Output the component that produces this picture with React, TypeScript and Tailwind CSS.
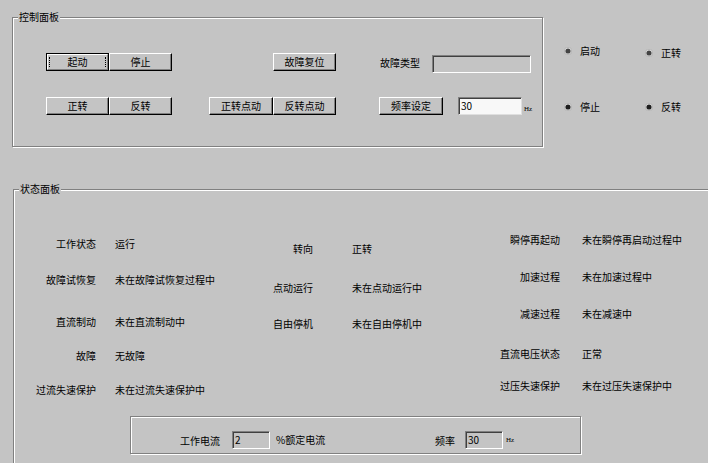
import React from 'react';

const font = { fontFamily: '"Noto Sans CJK SC", "Liberation Sans", sans-serif' };

function Btn({ label, w, def }: { label: string; w: string; def?: boolean }) {
  if (def) {
    return (
      <button className={`${w} h-[18px] border border-black bg-[#c4c4c4] p-0`}>
        <div className="h-full w-full border border-t-white border-l-white border-b-[#808080] border-r-[#808080] px-[1px] py-[2px]">
          <div className="flex h-full w-full items-center justify-center border-x border-dotted border-black text-[10px] leading-none">
            {label}
          </div>
        </div>
      </button>
    );
  }
  return (
    <button className={`${w} flex h-[18px] items-center justify-center border border-t-white border-l-white border-b-black border-r-black bg-[#c4c4c4] p-0 text-[10px] leading-none shadow-[inset_-1px_-1px_0_#808080]`}>
      {label}
    </button>
  );
}

function Group({ title, className, children }: { title?: string; className: string; children: React.ReactNode }) {
  return (
    <div className={`relative border border-[#808080] shadow-[inset_1px_1px_0_#fff,1px_1px_0_#fff] ${className}`}>
      {title && (
        <span className="absolute -top-[7px] left-[5px] bg-[#c4c4c4] px-[1px] text-[10px] leading-[12px]">{title}</span>
      )}
      {children}
    </div>
  );
}

function Radio({ label, dark }: { label: string; dark?: boolean }) {
  return (
    <div className="flex h-[12px] items-center gap-[8px] text-[10px] leading-[12px]">
      <svg width="8" height="8" viewBox="0 0 8 8">
        <circle cx="4" cy="4" r="3.7" fill="#f2f2f2" stroke="#8a8a8a" strokeWidth="0.5" />
        <circle cx="4" cy="4" r="2.6" fill={dark ? '#1e1e1e' : '#444'} />
      </svg>
      <span>{label}</span>
    </div>
  );
}

type Row = { k: string; v: string; mt: string };

function Column({ rows, lw, gap, w }: { rows: Row[]; lw: string; gap: string; w: string }) {
  return (
    <div className={`${w} flex flex-col`}>
      {rows.map((r) => (
        <div key={r.k} className={`${r.mt} flex h-[12px] items-center text-[10px] leading-[12px]`}>
          <span className={`${lw} whitespace-nowrap text-right`}>{r.k}</span>
          <span className={`${gap} whitespace-nowrap`}>{r.v}</span>
        </div>
      ))}
    </div>
  );
}

const col1: Row[] = [
  { k: '工作状态', v: '运行', mt: 'mt-[48px]' },
  { k: '故障试恢复', v: '未在故障试恢复过程中', mt: 'mt-[24px]' },
  { k: '直流制动', v: '未在直流制动中', mt: 'mt-[30px]' },
  { k: '故障', v: '无故障', mt: 'mt-[22px]' },
  { k: '过流失速保护', v: '未在过流失速保护中', mt: 'mt-[22px]' },
];
const col2: Row[] = [
  { k: '转向', v: '正转', mt: 'mt-[53px]' },
  { k: '点动运行', v: '未在点动运行中', mt: 'mt-[27px]' },
  { k: '自由停机', v: '未在自由停机中', mt: 'mt-[24px]' },
];
const col3: Row[] = [
  { k: '瞬停再起动', v: '未在瞬停再启动过程中', mt: 'mt-[44px]' },
  { k: '加速过程', v: '未在加速过程中', mt: 'mt-[25px]' },
  { k: '减速过程', v: '未在减速中', mt: 'mt-[25px]' },
  { k: '直流电压状态', v: '正常', mt: 'mt-[28px]' },
  { k: '过压失速保护', v: '未在过压失速保护中', mt: 'mt-[20px]' },
];

export default function App() {
  return (
    <div className="h-[463px] w-[708px] overflow-hidden bg-[#c4c4c4] text-black select-none" style={font}>
      <div className="flex items-start pt-[17px]">
        <Group title="控制面板" className="ml-[12px] h-[130px] w-[531px] shrink-0">
          <div className="flex flex-col pl-[33px] pt-[35px]">
            <div className="flex items-start">
              <Btn label="起动" w="w-[63px]" def />
              <Btn label="停止" w="w-[63px]" />
              <div className="ml-[101px]"><Btn label="故障复位" w="w-[63px]" /></div>
              <span className="ml-[44px] mt-[4px] text-[10px] leading-[12px]">故障类型</span>
              <div className="ml-[12px] mt-[2px] h-[18px] w-[99px] border border-t-[#808080] border-l-[#808080] border-b-white border-r-white shadow-[inset_1px_1px_0_#404040]" />
            </div>
            <div className="mt-[24px] flex items-start">
              <Btn label="正转" w="w-[63px]" />
              <Btn label="反转" w="w-[63px]" />
              <div className="ml-[37px] flex">
                <Btn label="正转点动" w="w-[64px]" />
                <Btn label="反转点动" w="w-[63px]" />
              </div>
              <div className="ml-[43px]"><Btn label="频率设定" w="w-[64px]" /></div>
              <div className="ml-[15px] flex h-[18px] w-[64px] items-center border border-t-[#808080] border-l-[#808080] border-b-[#dfdfdf] border-r-[#dfdfdf] bg-[#f8f8f8] pl-[2px] text-[10px] leading-none shadow-[inset_1px_1px_0_#404040]">
                30
              </div>
              <span className="ml-[2px] mt-[9px] text-[7px] leading-none" style={{ fontFamily: '"Liberation Serif", serif' }}>Hz</span>
            </div>
          </div>
        </Group>
        <div className="ml-[21px] mt-[28px] flex">
          <div className="flex w-[81px] flex-col gap-[44px]">
            <Radio label="启动" />
            <Radio label="停止" dark />
          </div>
          <div className="flex flex-col gap-[42px] pt-[2px]">
            <Radio label="正转" />
            <Radio label="反转" dark />
          </div>
        </div>
      </div>

      <Group title="状态面板" className="ml-[13px] mt-[42px] h-[320px] w-[720px]">
        <div className="flex flex-col pl-[16px]">
          <div className="flex items-start">
            <Column rows={col1} w="w-[230px]" lw="w-[66px]" gap="ml-[19px]" />
            <Column rows={col2} w="w-[220px]" lw="w-[53px]" gap="ml-[39px]" />
            <Column rows={col3} w="w-[240px]" lw="w-[80px]" gap="ml-[22px]" />
          </div>
          <Group className="ml-[100px] mt-[20px] h-[38px] w-[451px]">
            <div className="flex items-center pl-[49px] pt-[14px] text-[10px] leading-[12px]">
              <div className="flex w-[255px] items-center">
                <span className="mt-[1px]">工作电流</span>
                <div className="ml-[12px] flex h-[18px] w-[38px] items-center border border-t-[#808080] border-l-[#808080] border-b-white border-r-white pl-[2px] leading-none shadow-[inset_1px_1px_0_#404040]">2</div>
                <span className="ml-[6px]">%额定电流</span>
              </div>
              <span className="mt-[1px]">频率</span>
              <div className="ml-[10px] flex h-[18px] w-[38px] items-center border border-t-[#808080] border-l-[#808080] border-b-white border-r-white pl-[2px] leading-none shadow-[inset_1px_1px_0_#404040]">30</div>
              <span className="ml-[3px] text-[7px] leading-none" style={{ fontFamily: '"Liberation Serif", serif' }}>Hz</span>
            </div>
          </Group>
        </div>
      </Group>
    </div>
  );
}
